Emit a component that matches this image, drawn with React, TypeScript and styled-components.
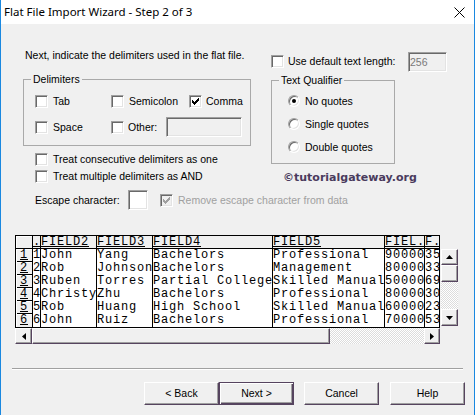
import React from "react";
import styled, { createGlobalStyle } from "styled-components";

const SHADOW = "#56445f";
const FACE = "#f0f0f0";

const GlobalStyle = createGlobalStyle`
  html, body { margin: 0; padding: 0; background: ${FACE}; }
  body { font-family: "Liberation Sans", Arial, sans-serif; font-size: 10.5px; color: #000; }
`;

const Window = styled.div`
  box-sizing: border-box;
  width: 475px;
  height: 415px;
  border-left: 1px solid #1a88e0;
  border-right: 1px solid #1a88e0;
  background: ${FACE};
  display: flex;
  flex-direction: column;
  overflow: hidden;
`;

const TitleBar = styled.div`
  flex: none;
  height: 24px;
  background: #fff;
  display: flex;
  align-items: center;
  justify-content: space-between;
  padding: 0 9px 0 3px;
  font-family: "Noto Sans", "Open Sans", sans-serif;
  font-size: 11.5px;
`;

const TitleText = styled.span`
  line-height: 16px;
  white-space: nowrap;
`;

const Form = styled.div`
  padding: 25px 0 0 22px;
`;

const TopGrid = styled.div`
  display: grid;
  grid-template-columns: 228px 202px;
  column-gap: 20px;
  align-items: start;
`;

const Column = styled.div`
  display: flex;
  flex-direction: column;
  align-items: flex-start;
`;

const Intro = styled.div`
  height: 13px;
  line-height: 13px;
  padding-left: 2px;
  margin-bottom: 17px;
  white-space: nowrap;
`;

const GroupBox = styled.div<{ $width: number; $top?: number }>`
  position: relative;
  box-sizing: border-box;
  width: ${(p) => p.$width}px;
  margin-top: ${(p) => p.$top ?? 0}px;
  border: 1px solid #a9a9a9;
`;

const GroupTitle = styled.span`
  position: absolute;
  top: -7px;
  left: 7px;
  padding: 0 2px;
  background: ${FACE};
  line-height: 13px;
  white-space: nowrap;
`;

const DelimGrid = styled.div`
  display: grid;
  grid-template-columns: 76px 78px auto;
  grid-auto-rows: 20px;
  row-gap: 6px;
  padding: 11px 0 8px 11px;
`;

const SpanCell = styled.div`
  grid-column: span 2;
  display: flex;
  align-items: center;
`;

const CheckItem = styled.label<{ $gap?: number; $h?: number; $muted?: boolean }>`
  display: flex;
  align-items: center;
  gap: ${(p) => p.$gap ?? 5}px;
  height: ${(p) => p.$h ?? 20}px;
  white-space: nowrap;
  line-height: 13px;
  color: ${(p) => (p.$muted ? "#a0a0a0" : "#000")};
`;

const Box = styled.span<{ $disabled?: boolean }>`
  box-sizing: border-box;
  flex: none;
  width: 13px;
  height: 13px;
  border: 1px solid;
  border-color: #a0a0a0 #fff #fff #a0a0a0;
  box-shadow: inset 1px 1px 0 #696969, inset -1px -1px 0 #e3e3e3;
  background: ${(p) => (p.$disabled ? FACE : "#fff")};
  display: flex;
  align-items: center;
  justify-content: center;
`;

const CHECK_ROWS: [number, number, number][] = [
  [6, 0, 1],
  [5, 1, 2],
  [0, 2, 1],
  [4, 2, 3],
  [0, 3, 2],
  [3, 3, 3],
  [0, 4, 5],
  [1, 5, 3],
  [2, 6, 1],
];

function Checkbox({ checked, disabled }: { checked?: boolean; disabled?: boolean }) {
  return (
    <Box $disabled={disabled}>
      {checked && (
        <svg width="7" height="7" viewBox="0 0 7 7" shapeRendering="crispEdges">
          {CHECK_ROWS.map(([x, y, w], i) => (
            <rect key={i} x={x} y={y} width={w} height={1} fill={disabled ? "#a0a0a0" : "#000"} />
          ))}
        </svg>
      )}
    </Box>
  );
}

const RadioRing = styled.span`
  box-sizing: border-box;
  flex: none;
  width: 12px;
  height: 12px;
  border-radius: 50%;
  border: 1px solid;
  border-color: #a0a0a0 #fff #fff #a0a0a0;
  box-shadow: inset 1px 1px 0 #696969, inset -1px -1px 0 #e3e3e3;
  background: #fff;
  display: flex;
  align-items: center;
  justify-content: center;
`;

const RadioDot = styled.span`
  width: 4px;
  height: 4px;
  border-radius: 50%;
  background: #000;
`;

const TextField = styled.div<{ $w: number; $h: number; $bg?: string; $ml?: number }>`
  box-sizing: border-box;
  flex: none;
  width: ${(p) => p.$w}px;
  height: ${(p) => p.$h}px;
  margin-left: ${(p) => p.$ml ?? 0}px;
  border: 1px solid;
  border-color: #a0a0a0 #fff #fff #a0a0a0;
  box-shadow: inset 1px 1px 0 #696969, inset -1px -1px 0 #e3e3e3;
  background: ${(p) => p.$bg ?? "#fff"};
  color: #7a7a7a;
  padding: 0 1px;
  line-height: 18px;
`;

const LengthRow = styled.div`
  display: grid;
  grid-template-columns: 137px 39px;
  align-items: center;
  height: 21px;
  margin-top: 2px;
`;

const RadioList = styled.div`
  display: flex;
  flex-direction: column;
  gap: 3px;
  padding: 10px 0 6px 16px;
`;

const Watermark = styled.div`
  margin: 7px 0 0 12px;
  font-family: "DejaVu Sans", Verdana, sans-serif;
  font-weight: bold;
  font-size: 11px;
  line-height: 13px;
  color: #4a3b5d;
  white-space: nowrap;
`;

const OptionList = styled.div`
  display: flex;
  flex-direction: column;
  padding: 5px 0 0 12px;
`;

const EscapeRow = styled.div`
  display: flex;
  align-items: center;
  height: 20px;
  margin-top: 5px;
  padding-left: 12px;
`;

const EscLabel = styled.span`
  width: 93px;
  line-height: 13px;
  white-space: nowrap;
`;

const EscCheck = styled.div`
  margin-left: 12px;
`;

/* ---------- data grid ---------- */

const GridSection = styled.div`
  margin-top: 25px;
  padding-left: 14px;
  display: flex;
  flex-direction: column;
`;

const GridTop = styled.div`
  display: flex;
  align-items: flex-start;
`;

const Table = styled.div`
  box-sizing: border-box;
  width: 425px;
  border-top: 1px solid #000;
  border-bottom: 1px solid #000;
  border-left: 1px solid #000;
  display: grid;
  grid-template-columns: 17px 8px 56px 56px 120px 112px 40px 15px;
  grid-auto-rows: 13px;
  background: #fff;
  font-family: "Liberation Mono", "Courier New", monospace;
  font-size: 12px;
  letter-spacing: 0.8px;
  line-height: 12px;
`;

type CellKind = "corner" | "head" | "rowhead" | "data";

const Cell = styled.div<{ $kind: CellKind; $last?: boolean }>`
  box-sizing: border-box;
  border-right: 1px solid #000;
  overflow: hidden;
  white-space: nowrap;
  background: ${(p) => (p.$kind === "data" ? "#fff" : FACE)};
  border-bottom: ${(p) => (p.$kind === "head" || p.$kind === "corner" ? "1px solid #000" : "0")};
  text-decoration: ${(p) => (p.$kind === "head" || p.$kind === "rowhead" ? "underline" : "none")};
  text-align: ${(p) => (p.$kind === "rowhead" ? "center" : "left")};
  box-shadow: ${(p) =>
    p.$kind === "rowhead"
      ? p.$last
        ? "inset 1px 1px 0 #fff"
        : "inset 1px 1px 0 #fff, inset 0 -1px 0 #000"
      : p.$kind === "corner"
      ? "inset 1px 1px 0 #fff"
      : "none"};
`;

const ScrollButton = styled.div<{ $h?: number; $w?: number; $grow?: boolean }>`
  box-sizing: border-box;
  flex: ${(p) => (p.$grow ? "1" : "none")};
  width: ${(p) => (p.$w ? `${p.$w}px` : "auto")};
  height: ${(p) => (p.$h ? `${p.$h}px` : "auto")};
  background: ${FACE};
  border: 1px solid;
  border-color: #fff ${SHADOW} ${SHADOW} #fff;
  box-shadow: inset -1px -1px 0 #a0a0a0;
  display: flex;
  align-items: center;
  justify-content: center;
`;

const Track = styled.div`
  flex: 1;
  background-color: #fff;
  background-image: conic-gradient(#dcdcdc 25%, transparent 0 50%, #dcdcdc 0 75%, transparent 0);
  background-size: 2px 2px;
`;

const VScroll = styled.div`
  margin: 14px 0 0 1px;
  width: 17px;
  height: 77px;
  display: flex;
  flex-direction: column;
`;

const HScroll = styled.div`
  width: 425px;
  height: 16px;
  display: flex;
`;

function Arrow({ dir }: { dir: "up" | "down" | "left" | "right" }) {
  const horizontal = dir === "up" || dir === "down";
  const w = horizontal ? 7 : 4;
  const h = horizontal ? 4 : 7;
  const pts = {
    up: "3.5,0 7,4 0,4",
    down: "0,0 7,0 3.5,4",
    left: "4,0 4,7 0,3.5",
    right: "0,0 4,3.5 0,7",
  }[dir];
  return (
    <svg width={w} height={h} viewBox={`0 0 ${w} ${h}`}>
      <polygon points={pts} fill="#000" />
    </svg>
  );
}

const HEADERS = ["", ".", "FIELD2", "FIELD3", "FIELD4", "FIELD5", "FIEL.", "F."];
const ROWS = [
  ["1", "1", "John", "Yang", "Bachelors", "Professional", "90000", "35"],
  ["2", "2", "Rob", "Johnson", "Bachelors", "Management", "80000", "33"],
  ["3", "3", "Ruben", "Torres", "Partial College", "Skilled Manual", "50000", "69"],
  ["4", "4", "Christy", "Zhu", "Bachelors", "Professional", "80000", "30"],
  ["5", "5", "Rob", "Huang", "High School", "Skilled Manual", "60000", "23"],
  ["6", "6", "John", "Ruiz", "Bachelors", "Professional", "70000", "53"],
];

/* ---------- footer ---------- */

const Separator = styled.div`
  margin: 24px 0 0 11px;
  width: 451px;
  border-top: 1px solid #a0a0a0;
  border-bottom: 1px solid #fff;
`;

const ButtonRow = styled.div`
  margin-top: 12px;
  display: flex;
  justify-content: flex-end;
  padding-right: 9px;
`;

const DialogButton = styled.div<{ $default?: boolean; $space?: number }>`
  box-sizing: border-box;
  width: 75px;
  height: 23px;
  margin-left: ${(p) => p.$space ?? 0}px;
  background: ${FACE};
  border: 1px solid ${(p) => (p.$default ? SHADOW : "transparent")};
  box-shadow: ${(p) =>
    p.$default
      ? `inset 1px 1px 0 #fff, inset -1px -1px 0 ${SHADOW}, inset -2px -2px 0 #a0a0a0`
      : `inset 1px 1px 0 #fff, inset -1px -1px 0 ${SHADOW}, inset -2px -2px 0 #a0a0a0`};
  ${(p) => (!p.$default ? `border-color: #fff ${SHADOW} ${SHADOW} #fff; box-shadow: inset -1px -1px 0 #a0a0a0;` : "")}
  display: flex;
  align-items: center;
  justify-content: center;
  line-height: 13px;
  white-space: nowrap;
`;

export default function App() {
  return (
    <>
      <GlobalStyle />
      <Window>
        <TitleBar>
          <TitleText>Flat File Import Wizard - Step 2 of 3</TitleText>
          <svg width="11" height="11" viewBox="0 0 11 11">
            <path d="M0.5 0.5 L10.5 10.5 M10.5 0.5 L0.5 10.5" stroke="#000" strokeWidth="1" />
          </svg>
        </TitleBar>

        <Form>
          <TopGrid>
            <Column>
              <Intro>Next, indicate the delimiters used in the flat file.</Intro>
              <GroupBox $width={228}>
                <GroupTitle>Delimiters</GroupTitle>
                <DelimGrid>
                  <CheckItem>
                    <Checkbox />
                    Tab
                  </CheckItem>
                  <CheckItem>
                    <Checkbox />
                    Semicolon
                  </CheckItem>
                  <CheckItem $gap={4}>
                    <Checkbox checked />
                    Comma
                  </CheckItem>
                  <CheckItem>
                    <Checkbox />
                    Space
                  </CheckItem>
                  <SpanCell>
                    <CheckItem $gap={4}>
                      <Checkbox />
                      Other:
                    </CheckItem>
                    <TextField $w={76} $h={20} $bg={FACE} $ml={9} />
                  </SpanCell>
                </DelimGrid>
              </GroupBox>
              <OptionList>
                <CheckItem $h={17}>
                  <Checkbox />
                  Treat consecutive delimiters as one
                </CheckItem>
                <CheckItem $h={17}>
                  <Checkbox />
                  Treat multiple delimiters as AND
                </CheckItem>
              </OptionList>
            </Column>

            <Column>
              <LengthRow>
                <CheckItem $gap={4} $h={21}>
                  <Checkbox />
                  Use default text length:
                </CheckItem>
                <TextField $w={39} $h={20} $bg={FACE}>
                  256
                </TextField>
              </LengthRow>
              <GroupBox $width={124} $top={8}>
                <GroupTitle>Text Qualifier</GroupTitle>
                <RadioList>
                  <CheckItem>
                    <RadioRing>
                      <RadioDot />
                    </RadioRing>
                    No quotes
                  </CheckItem>
                  <CheckItem>
                    <RadioRing />
                    Single quotes
                  </CheckItem>
                  <CheckItem>
                    <RadioRing />
                    Double quotes
                  </CheckItem>
                </RadioList>
              </GroupBox>
              <Watermark>©tutorialgateway.org</Watermark>
            </Column>
          </TopGrid>

          <EscapeRow>
            <EscLabel>Escape character:</EscLabel>
            <TextField $w={20} $h={20} />
            <EscCheck>
              <CheckItem $muted>
                <Checkbox checked disabled />
                Remove escape character from data
              </CheckItem>
            </EscCheck>
          </EscapeRow>
        </Form>

        <GridSection>
          <GridTop>
            <Table>
              {HEADERS.map((h, i) => (
                <Cell key={`h${i}`} $kind={i === 0 ? "corner" : "head"}>
                  {h}
                </Cell>
              ))}
              {ROWS.map((row, r) =>
                row.map((v, c) => (
                  <Cell key={`${r}-${c}`} $kind={c === 0 ? "rowhead" : "data"} $last={r === ROWS.length - 1}>
                    {v}
                  </Cell>
                ))
              )}
            </Table>
            <VScroll>
              <ScrollButton $h={16}>
                <Arrow dir="up" />
              </ScrollButton>
              <ScrollButton $h={17} />
              <Track />
              <ScrollButton $h={17}>
                <Arrow dir="down" />
              </ScrollButton>
            </VScroll>
          </GridTop>
          <HScroll>
            <ScrollButton $w={17}>
              <Arrow dir="left" />
            </ScrollButton>
            <ScrollButton $w={298} />
            <Track />
            <ScrollButton $w={16}>
              <Arrow dir="right" />
            </ScrollButton>
          </HScroll>
        </GridSection>

        <Separator />
        <ButtonRow>
          <DialogButton>&lt; Back</DialogButton>
          <DialogButton $default>Next &gt;</DialogButton>
          <DialogButton $space={10}>Cancel</DialogButton>
          <DialogButton $space={11}>Help</DialogButton>
        </ButtonRow>
      </Window>
    </>
  );
}
